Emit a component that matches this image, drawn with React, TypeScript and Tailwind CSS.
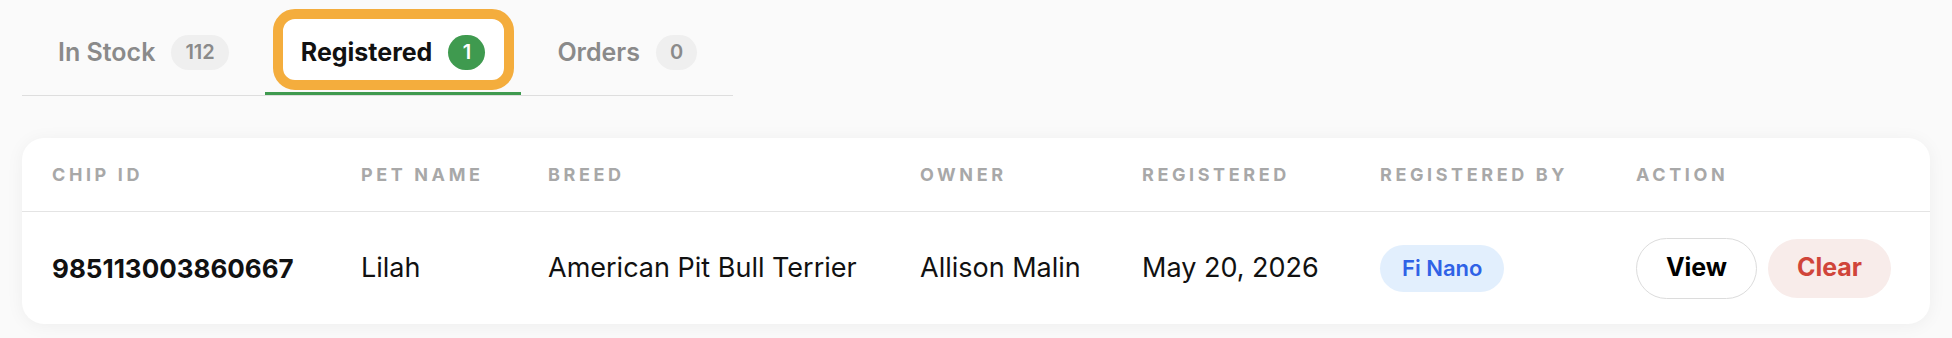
const tabs = [
  { label: "In Stock", count: "112", active: false },
  { label: "Registered", count: "1", active: true },
  { label: "Orders", count: "0", active: false },
];

const columns = [
  "Chip ID",
  "Pet Name",
  "Breed",
  "Owner",
  "Registered",
  "Registered By",
  "Action",
];

const rows = [
  {
    chipId: "985113003860667",
    petName: "Lilah",
    breed: "American Pit Bull Terrier",
    owner: "Allison Malin",
    registered: "May 20, 2026",
    registeredBy: "Fi Nano",
  },
];

const gridCols =
  "grid grid-cols-[309px_187px_372px_222px_238px_256px_1fr] items-center";

function Tab({ label, count, active }: { label: string; count: string; active: boolean }) {
  return (
    <button
      className={`relative flex h-[83px] items-center gap-4 px-[36px] border-b-[3px] ${
        active ? "border-[#3f9a4f]" : "border-transparent"
      }`}
    >
      {active && (
        // highlight ring around the selected tab
        <span className="absolute left-[8px] right-[7px] top-[-3px] bottom-[2px] rounded-[22px] border-[10px] border-[#f4ad3d] bg-white" />
      )}
      <span
        className={`relative text-[25px] leading-none ${
          active ? "font-bold text-[#111]" : "font-semibold text-[#8a8a8a]"
        }`}
      >
        {label}
      </span>
      <span
        className={`relative flex h-[35px] items-center justify-center rounded-full text-[20px] font-semibold leading-none ${
          active
            ? "w-[37px] bg-[#3f9a4f] text-white"
            : "px-[14px] bg-[#efefef] text-[#8a8a8a]"
        }`}
      >
        {count}
      </span>
    </button>
  );
}

export default function App() {
  return (
    <div
      className="h-[338px] w-full bg-[#fafafa] px-[22px] pt-[12px]"
      style={{ fontFamily: "Inter, 'Noto Sans', sans-serif" }}
    >
      <div className="inline-flex border-b border-[#dedede]">
        {tabs.map((t) => (
          <Tab key={t.label} {...t} />
        ))}
      </div>

      <div className="mt-[42px] rounded-[22px] bg-white shadow-[0_2px_18px_rgba(0,0,0,0.05)]">
        <div className={`${gridCols} h-[74px] border-b border-[#e4e4e4]`}>
          {columns.map((c) => (
            <div
              key={c}
              className="px-[30px] text-[18px] font-bold uppercase tracking-[0.2em] text-[#a8a8a8]"
            >
              {c}
            </div>
          ))}
        </div>
        {rows.map((r) => (
          <div key={r.chipId} className={`${gridCols} h-[112px] text-[27px] text-[#111]`}>
            <div className="px-[30px] text-[26px] font-bold">{r.chipId}</div>
            <div className="px-[30px]">{r.petName}</div>
            <div className="px-[30px]">{r.breed}</div>
            <div className="px-[30px]">{r.owner}</div>
            <div className="px-[30px]">{r.registered}</div>
            <div className="px-[30px]">
              <span className="inline-flex h-[47px] items-center rounded-full bg-[#e2effd] px-[22px] text-[22px] font-semibold text-[#2f62e6]">
                {r.registeredBy}
              </span>
            </div>
            <div className="flex items-center gap-[11px] px-[30px]">
              <button className="h-[61px] w-[121px] rounded-full border border-[#dcdcdc] bg-white text-[25px] font-bold text-black">
                View
              </button>
              <button className="h-[59px] w-[123px] rounded-full bg-[#f8ecea] text-[25px] font-bold text-[#d0453a]">
                Clear
              </button>
            </div>
          </div>
        ))}
      </div>
    </div>
  );
}
